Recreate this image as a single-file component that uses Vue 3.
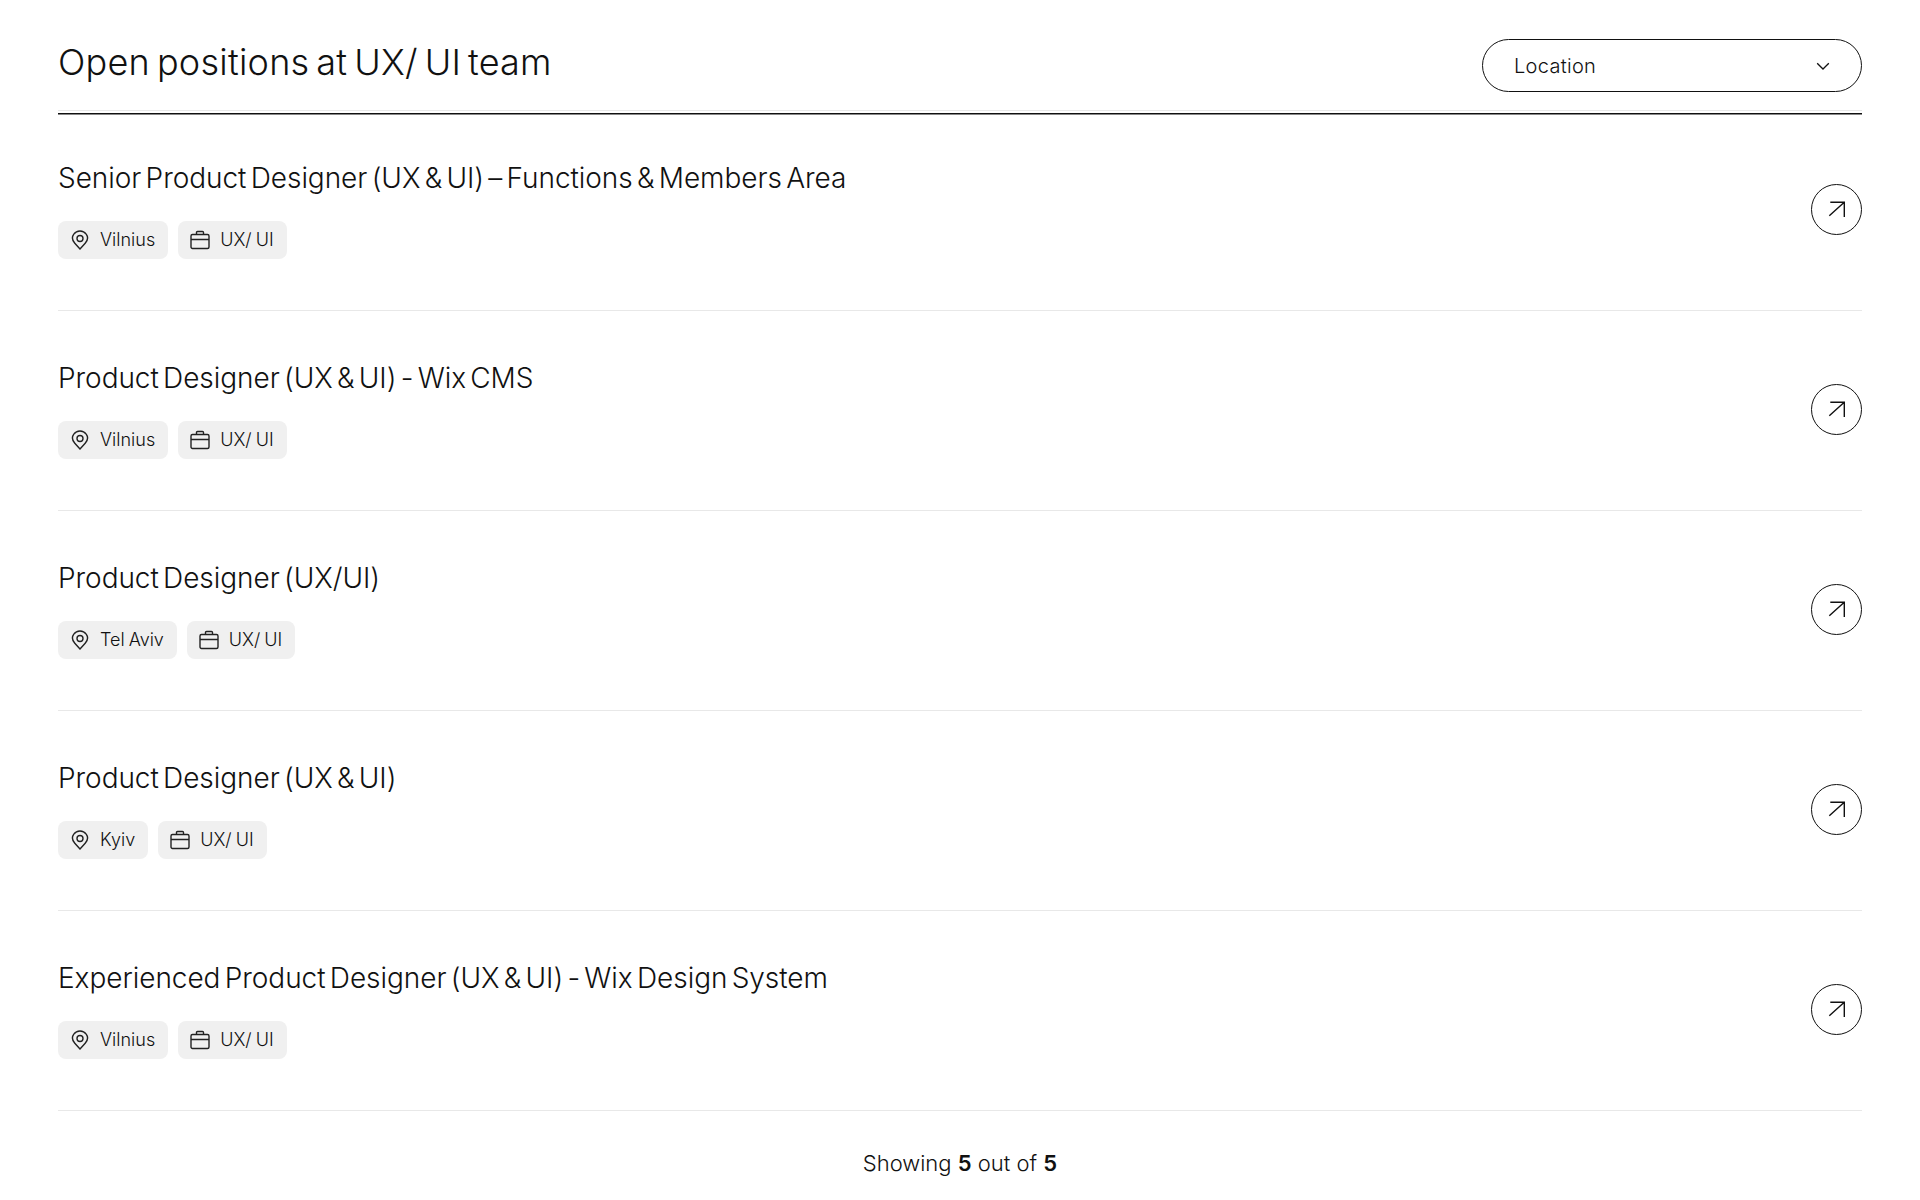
<template>
  <div class="page">
    <!-- Header -->
    <div class="header">
      <h2 class="title">Open positions at UX/ UI team</h2>
      <div class="select">
        <span>Location</span>
        <svg width="16" height="16" viewBox="0 0 16 16" fill="none" stroke="#111" stroke-width="1.3">
          <path d="M2.200 5.300L8 11l5.800-5.700" />
        </svg>
      </div>
    </div>

    <!-- Positions -->
    <div v-for="job in jobs" :key="job.title" class="row">
      <div class="row-main">
        <h3 class="job-title">{{ job.title }}</h3>
        <div class="tags">
          <span class="tag">
            <svg width="20" height="20" viewBox="0 0 20 20" fill="none" stroke="#222" stroke-width="1.4">
              <path d="M10 19l-5.200-5.800C1.800 9.800 2.200 6.300 3.800 4.200 5.200 2.200 7.500 1 10 1s4.800 1.200 6.200 3.200c1.600 2.100 2 5.600-1 9L10 19z" />
              <circle cx="10" cy="8.500" r="3" />
            </svg>
            {{ job.location }}
          </span>
          <span class="tag">
            <svg width="20" height="20" viewBox="0 0 20 20" fill="none" stroke="#222" stroke-width="1.4">
              <rect x="1" y="4.500" width="18" height="14" rx="1.500" />
              <path d="M1 9.500h18M6.500 4.500V2.500a1 1 0 0 1 1-1h5a1 1 0 0 1 1 1v2" />
            </svg>
            UX/ UI
          </span>
        </div>
      </div>
      <div class="arrow">
        <svg width="20" height="20" viewBox="0 0 20 20" fill="none" stroke="#111" stroke-width="1.4">
          <path d="M2.300 16.700L17 3.500M3.300 3.300H17.300V18" />
        </svg>
      </div>
    </div>

    <div class="footer">Showing <b>5</b> out of <b>5</b></div>
  </div>
</template>

<script setup>
const jobs = [
  { title: "Senior Product Designer (UX & UI) – Functions & Members Area", location: "Vilnius" },
  { title: "Product Designer (UX & UI) - Wix CMS", location: "Vilnius" },
  { title: "Product Designer (UX/UI)", location: "Tel Aviv" },
  { title: "Product Designer (UX & UI)", location: "Kyiv" },
  { title: "Experienced Product Designer (UX & UI) - Wix Design System", location: "Vilnius" },
];
</script>

<style scoped>
.page {
  height: 1200px;
  overflow: hidden;
  padding: 0 58px;
  background: #fff;
  color: #111;
  font-family: Inter, "Liberation Sans", sans-serif;
}

/* light rule in flow, dark rule sits just under it */
.header {
  display: flex;
  justify-content: space-between;
  align-items: flex-start;
  height: 111px;
  box-sizing: border-box;
  padding-top: 39px;
  border-bottom: 1px solid #e8e8e8;
  box-shadow: 0 2px 0 #fff, 0 3.500px 0 #111;
}

.title {
  margin: 0;
  font-size: 36px;
  line-height: 46px;
  font-weight: 300;
  letter-spacing: 0.25px;
  word-spacing: -3.500px;
}

.select {
  width: 380px;
  height: 53px;
  box-sizing: border-box;
  display: flex;
  align-items: center;
  justify-content: space-between;
  padding: 0 30px 0 31px;
  border: 1.300px solid #111;
  border-radius: 27px;
  font-size: 20px;
  font-weight: 300;
  letter-spacing: 0.3px;
}

.row {
  height: 200px;
  box-sizing: border-box;
  display: flex;
  align-items: center;
  justify-content: space-between;
  border-bottom: 1px solid #e8e8e8;
}

.row-main {
  display: flex;
  flex-direction: column;
  gap: 25px;
  margin-top: -3px;
}

.job-title {
  margin: 0;
  font-size: 28px;
  line-height: 36px;
  font-weight: 300;
  letter-spacing: -0.05px;
  word-spacing: -3.500px;
}

.tags {
  display: flex;
  gap: 10px;
}

.tag {
  display: flex;
  align-items: center;
  gap: 10px;
  height: 38px;
  padding: 0 13px 0 12px;
  border-radius: 8px;
  background: #f0f0f0;
  font-size: 18px;
  font-weight: 300;
  word-spacing: -1px;
}

.arrow {
  width: 51px;
  height: 51px;
  margin-bottom: 3px;
  box-sizing: border-box;
  display: flex;
  align-items: center;
  justify-content: center;
  border: 1.300px solid #111;
  border-radius: 50%;
}

.footer {
  margin-top: 38px;
  text-align: center;
  font-size: 22px;
  line-height: 28px;
  font-weight: 300;
}

.footer b {
  font-weight: 600;
}
</style>
